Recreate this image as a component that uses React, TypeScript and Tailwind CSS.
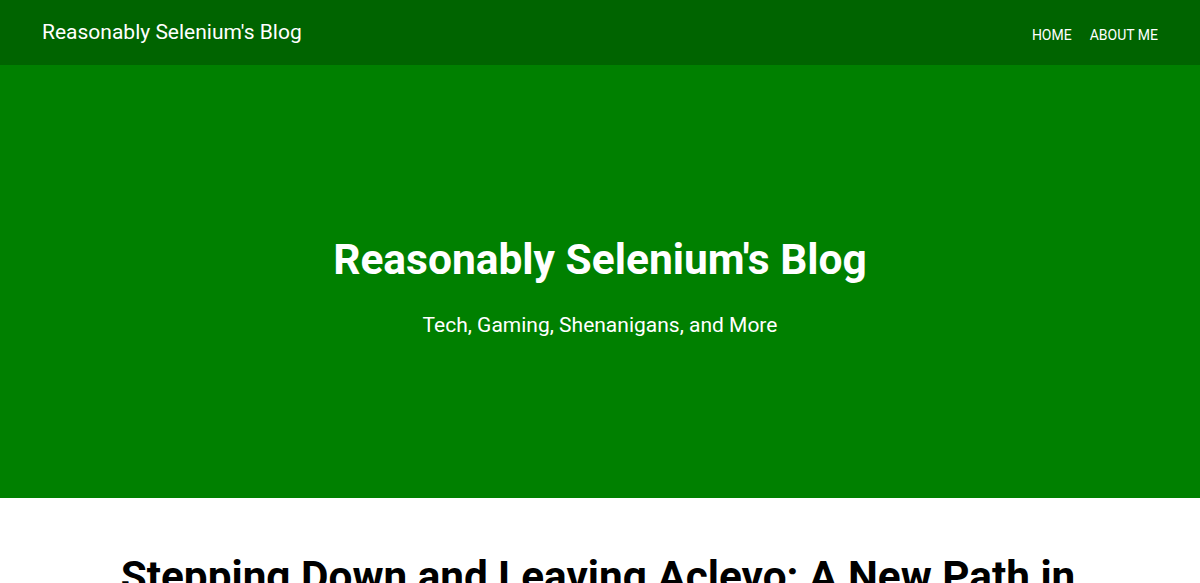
import React from "react";

const Navbar = () => {
  return (
    <div className="flex justify-between items-center bg-[#006400] text-white h-[65px] px-[42px]">
      <a href="#" className="text-[21px] pt-[1px]">
        Reasonably Selenium&apos;s Blog
      </a>
      <div className="flex items-center gap-[18px] text-[14px] uppercase pt-[6px]">
        <a href="#">Home</a>
        <a href="#">About Me</a>
      </div>
    </div>
  );
};

const Hero = () => {
  return (
    <div className="flex flex-col justify-center items-center bg-[#008000] text-white h-[433px] text-center pt-[11px]">
      <h1 className="text-[42.5px] font-bold leading-[50px]">Reasonably Selenium&apos;s Blog</h1>
      <p className="text-[21px] leading-[28px] mt-[26px]">Tech, Gaming, Shenanigans, and More</p>
    </div>
  );
};

export default function App() {
  return (
    <div className="min-h-screen bg-white font-['Roboto',sans-serif]">
      <Navbar />
      <Hero />
      <div className="max-w-[1000px] mx-auto pt-[54px] pl-4 pr-[20px] text-center">
        <h2 className="text-[42.3px] font-bold leading-[50px] text-black">
          Stepping Down and Leaving Aclevo: A New Path in Tech
        </h2>
      </div>
    </div>
  );
}
